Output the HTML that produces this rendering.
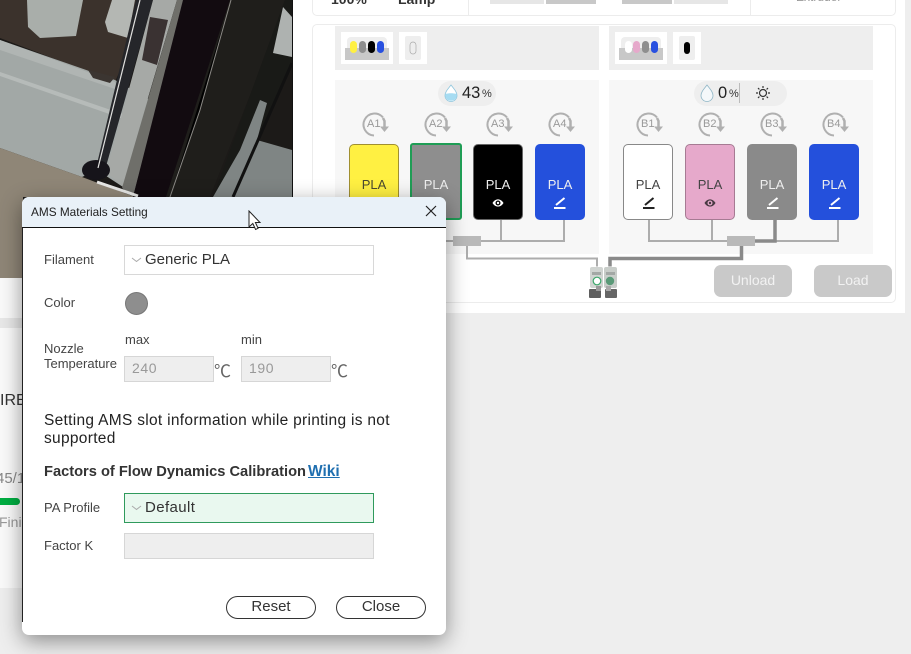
<!DOCTYPE html>
<html><head><meta charset="utf-8"><style>
html,body{margin:0;padding:0}
body{width:911px;height:654px;overflow:hidden;position:relative;background:#eeeeee;font-family:"Liberation Sans","DejaVu Sans",sans-serif;color:#323a3d}
div,span,a{position:absolute;white-space:nowrap;box-sizing:border-box}
.slot{top:144px;width:50px;height:76px;border-radius:5px;color:#fff;font-size:13px;text-align:center;line-height:16px;padding-top:32px}
.lab{font-size:13px;color:#444}
.in{background:#eee;border:1px solid #d6d6d6}
.btn{top:596px;height:23px;width:90px;border:1px solid #333;border-radius:12px;background:#fff;font-size:15px;text-align:center;line-height:19px;color:#333}
.gray{top:265px;width:78px;height:32px;border-radius:7px;background:#c9c9c9;color:#f2f2f2;font-size:14px;text-align:center;line-height:31px}
.n{top:118px;font-size:11px;line-height:13px;color:#999}
.deg{top:359px;font-size:17px;color:#666;line-height:22px;font-family:"Noto Sans CJK SC",sans-serif}
</style></head><body>

<!-- left panel -->
<div style="left:0;top:278px;width:23px;height:310px;background:#fafafa"></div>
<div style="left:0;top:318px;width:23px;height:10px;background:#e8e8e8"></div>
<div style="left:0;top:391px;width:23px;font-size:16px;color:#333;line-height:20px;height:20px;overflow:hidden">IRE</div>
<div style="left:-4px;top:470px;width:27px;font-size:15px;color:#888;overflow:hidden">45/1</div>
<div style="left:0;top:498px;width:20px;height:7px;background:#00ae42;border-radius:0 4px 4px 0"></div>
<div style="left:-1px;top:514px;width:24px;font-size:14px;color:#999;overflow:hidden">Fini</div>

<!-- right panel -->
<div style="left:293px;top:0;width:612px;height:313px;background:#fff"></div>
<div style="left:312px;top:-20px;width:584px;height:36px;border:1px solid #ececec;border-radius:5px"></div>
<div style="left:468px;top:0;width:1px;height:16px;background:#ececec"></div>
<div style="left:750px;top:0;width:1px;height:16px;background:#ececec"></div>
<div style="left:331px;top:-9px;font-size:14px;font-weight:bold;color:#333">100%</div>
<div style="left:398px;top:-9px;font-size:14px;font-weight:bold;color:#333">Lamp</div>
<div style="left:490px;top:0;width:54px;height:4px;background:#e6e6e6"></div>
<div style="left:546px;top:0;width:50px;height:4px;background:#c8c8c8"></div>
<div style="left:622px;top:0;width:50px;height:4px;background:#c8c8c8"></div>
<div style="left:674px;top:0;width:54px;height:4px;background:#e6e6e6"></div>
<div style="left:796px;top:-10px;font-size:12px;color:#999">Extruder</div>
<div style="left:312px;top:24px;width:584px;height:279px;border:1px solid #ececec;border-radius:5px"></div>

<div style="left:335px;top:26px;width:264px;height:44px;background:#eee"></div>
<div style="left:609px;top:26px;width:264px;height:44px;background:#eee"></div>
<div style="left:335px;top:80px;width:264px;height:174px;background:#f7f7f7"></div>
<div style="left:609px;top:80px;width:264px;height:174px;background:#f7f7f7"></div>

<svg style="position:absolute;left:0;top:0" width="911" height="654">
<rect x="341" y="32" width="52" height="32" fill="#fff"/><rect x="399" y="32" width="28" height="32" fill="#fff"/>
<rect x="347" y="37" width="40" height="22" rx="4" fill="#eee"/><rect x="345" y="48" width="44" height="12" fill="#c8c8c8"/>
<rect x="350" y="41" width="7" height="12" rx="3.500" fill="#fff042"/><rect x="359" y="41" width="7" height="12" rx="3.500" fill="#8e8e8e"/><rect x="368" y="41" width="7" height="12" rx="3.500" fill="#000"/><rect x="377" y="41" width="7" height="12" rx="3.500" fill="#2850e0"/>
<rect x="405" y="36" width="16" height="24" rx="2" fill="#eee"/><rect x="410" y="42" width="6" height="12" rx="3" fill="none" stroke="#aaa" stroke-width=".7"/>
<rect x="615" y="32" width="52" height="32" fill="#fff"/><rect x="673" y="32" width="28" height="32" fill="#fff"/>
<rect x="621" y="37" width="40" height="22" rx="4" fill="#eee"/><rect x="619" y="48" width="44" height="12" fill="#c8c8c8"/>
<rect x="625" y="41" width="7" height="12" rx="3.500" fill="#fff"/><rect x="633" y="41" width="7" height="12" rx="3.500" fill="#e6a9cb"/><rect x="642" y="41" width="7" height="12" rx="3.500" fill="#8e8e8e"/><rect x="651" y="41" width="7" height="12" rx="3.500" fill="#2850e0"/>
<rect x="679" y="36" width="16" height="24" rx="2" fill="#eee"/><rect x="684" y="42" width="6" height="12" rx="3" fill="#000"/>

<rect x="438" y="81" width="58" height="25" rx="12.500" fill="#eeeeee"/>
<rect x="694" y="81" width="93" height="25" rx="12.500" fill="#eeeeee"/>
<path d="M451 85c-3 4-6 7-6 10.500a6 6 0 0 0 12 0c0-3.500-3-6.500-6-10.500z" fill="#fff" stroke="#8fc6dd" stroke-width=".8"/>
<path d="M445.400 94c3-1 8-1 11.200 0 .6 4-2 6.800-5.600 6.800s-6.200-2.800-5.600-6.800z" fill="#a6dcf2"/>
<path d="M707 85c-3 4-6 7-6 10.500a6 6 0 0 0 12 0c0-3.500-3-6.500-6-10.500z" fill="#f4f8fa" stroke="#8fb6c6" stroke-width=".8"/>
<line x1="739.500" y1="83" x2="739.500" y2="103" stroke="#bbb"/>
<circle cx="763" cy="93" r="3.500" fill="none" stroke="#333" stroke-width="1.200"/>
<path d="M763 86v2M763 98v2M756 93h2M768 93h2M758 88l1.400 1.400M766.600 96.600l1.400 1.400M758 98l1.400-1.400M766.600 89.400l1.400-1.400" stroke="#333" stroke-width="1.200"/>

<g fill="none" stroke="#adadad" stroke-width="2">
<path d="M501 220v21M564 220v21H440M467 246v12.500h130v8"/>
<path d="M649 220v21h90M712 220v21M838 220v21H775"/>
</g>
<g fill="none" stroke="#8a8a8a" stroke-width="3.500">
<path d="M775 220v21H745M741.500 246v12.500H610v8"/>
</g>
<rect x="453" y="236" width="28" height="10" fill="#b9b9b9"/>
<rect x="727" y="236" width="28" height="10" fill="#b9b9b9"/>

<!-- extruder -->
<rect x="590" y="267" width="13" height="21" rx="2" fill="#d0d4d1"/><rect x="604" y="267" width="13" height="21" rx="2" fill="#c8cdc9"/>
<rect x="592" y="272" width="9" height="3" fill="#a3a8a5"/><rect x="606" y="272" width="9" height="3" fill="#a3a8a5"/>
<circle cx="597" cy="281" r="3.800" fill="#fff" stroke="#3aa76a" stroke-width="1.200"/><circle cx="610" cy="281" r="4.200" fill="#5a9a78"/>
<rect x="589" y="289" width="12" height="9" rx="1" fill="#5e5e5e"/><rect x="605" y="289" width="12" height="9" rx="1" fill="#666"/>
<rect x="596" y="286" width="5" height="5" fill="#999"/><rect x="606" y="286" width="5" height="5" fill="#aaa"/>
</svg>

<div style="left:462px;top:84px;font-size:16.500px;color:#222;line-height:18px">43</div><div style="left:482px;top:88px;font-size:11px;color:#333">%</div>
<div style="left:718px;top:84px;font-size:16.500px;color:#222;line-height:18px">0</div><div style="left:729px;top:88px;font-size:11px;color:#333">%</div>

<svg style="position:absolute;left:0;top:0" width="911" height="654" fill="none">
<defs><g id="r"><path d="M11 22.500A11 11 0 1 1 20 4.500" stroke="#b0b0b0" stroke-width="2" fill="none"/><path d="M20 5l1.500 3v7" stroke="#b0b0b0" stroke-width="2.500" fill="none"/><path d="M17 13.500h9l-4.500 5.500z" fill="#b0b0b0"/></g></defs>
<use href="#r" x="363" y="113"/><use href="#r" x="425" y="113"/><use href="#r" x="487" y="113"/><use href="#r" x="549" y="113"/>
<use href="#r" x="637" y="113"/><use href="#r" x="699" y="113"/><use href="#r" x="761" y="113"/><use href="#r" x="823" y="113"/>
</svg>
<div class="n" style="left:367px">A1</div><div class="n" style="left:429px">A2</div><div class="n" style="left:491px">A3</div><div class="n" style="left:553px">A4</div>
<div class="n" style="left:641px">B1</div><div class="n" style="left:703px">B2</div><div class="n" style="left:765px">B3</div><div class="n" style="left:827px">B4</div>

<div class="slot" style="left:349px;background:#fff042;border:1px solid #a08f30;color:#4a4a30">PLA</div>
<div class="slot" style="left:410px;top:143px;width:52px;height:77px;background:#8e8e8e;border:2px solid #1f9d55;border-radius:3px;color:#eee;padding-top:32px">PLA</div>
<div class="slot" style="left:473px;background:#000;border:1px solid #666;color:#eee">PLA</div>
<div class="slot" style="left:535px;background:#2450dc;color:#eee;padding-top:33px">PLA</div>
<div class="slot" style="left:623px;background:#fff;border:1px solid #888;color:#444">PLA</div>
<div class="slot" style="left:685px;background:#e6a9cb;border:1px solid #a67b93;color:#444">PLA</div>
<div class="slot" style="left:747px;background:#8a8a8a;color:#eee;padding-top:33px">PLA</div>
<div class="slot" style="left:809px;background:#2450dc;color:#eee;padding-top:33px">PLA</div>
<svg style="position:absolute;left:0;top:0" width="911" height="654" fill="none" stroke-width="2">
<defs>
<g id="pen"><path d="M2 9L10.500 2"/><path d="M0 12h11.500"/></g>
</defs>
<use href="#pen" x="554" y="196" stroke="#fff"/><use href="#pen" x="643" y="196" stroke="#222"/><use href="#pen" x="767" y="196" stroke="#fff"/><use href="#pen" x="829" y="196" stroke="#fff"/>
<path d="M492.500 203c3-4.800 8-4.800 11 0-3 4.800-8 4.800-11 0z" fill="#fff" stroke="none"/><circle cx="498" cy="203" r="2.500" fill="#000"/><circle cx="498" cy="203" r="1.200" fill="#fff"/>
<path d="M704.500 203c3-4.800 8-4.800 11 0-3 4.800-8 4.800-11 0z" fill="#4a3a44" stroke="none"/><circle cx="710" cy="203" r="2.500" fill="#e6a9cb"/><circle cx="710" cy="203" r="1.200" fill="#4a3a44"/>
</svg>

<div class="gray" style="left:714px">Unload</div>
<div class="gray" style="left:814px">Load</div>

<!-- photo -->
<svg style="position:absolute;left:0;top:0" width="293" height="278" viewBox="0 0 293 278">
<rect width="293" height="278" fill="#1c1a18"/>
<polygon points="0,0 150,0 115,82 0,38" fill="#3b322c"/>
<polygon points="27,0 83,0 76,36 40,38 28,27" fill="#a9aeaa"/>
<polygon points="105,22 112,0 135,0 128,38 108,32" fill="#b4b7b3"/>
<polygon points="0,40 115,80 150,100 135,150 123,187 97,170 82,177 0,148" fill="#a2a8a6"/>
<polygon points="0,40 115,82 118,90 0,50" fill="#b0b5b3"/>
<polygon points="0,72 140,120 138,124 0,76" fill="#b6bbb9"/>
<polygon points="88,70 115,77 110,83 93,78" fill="#3b3531"/>
<polygon points="0,148 82,177 135,197 23,197 23,278 0,278" fill="#8f8677"/>
<polygon points="136,0 153,0 122,110 105,170 96,168" fill="#25262a"/>
<polygon points="153,0 177,0 140,125 123,187 106,172 130,85" fill="#a6a9a6"/>
<polygon points="150,17 168,20 157,65 142,60" fill="#3a3232"/>
<polygon points="177,0 185,0 133,197 122,188" fill="#6f6f6a"/>
<polygon points="183,0 230,0 166,197 133,197" fill="#120b10"/>
<polygon points="230,0 285,0 252,90 210,197 166,197" fill="#1f1e1b"/>
<polygon points="285,0 292,0 292,60 233,197 213,197" fill="#191a17"/>
<polygon points="273,53 283,7 292,17 292,57" fill="#aeb2b0"/>
<polygon points="213,197 240,150 260,100 267,103 257,140 292,150 292,197" fill="#7f8584"/>
<path d="M292 63L233 197" stroke="#111" stroke-width="3"/>
<path d="M82 170a14 10 0 1 0 28 0 14 10 0 1 0-28 0z" fill="#16141a"/>
<path d="M97 182L138 196" stroke="#e8e8e6" stroke-width="3"/>
<path d="M140 0L98 168" stroke="#e0e0de" stroke-width="1.200"/>
<path d="M231 0L200 110L170 197" stroke="#8d8b87" stroke-width="1"/>
<line x1="292.500" y1="0" x2="292.500" y2="197" stroke="#111"/>
</svg>

<!-- dialog -->
<div style="left:22px;top:197px;width:424px;height:438px;background:#fff;border-radius:7px;box-shadow:0 6px 22px rgba(0,0,0,.42)"></div>
<div style="left:22px;top:197px;width:424px;height:31px;background:#e9f1f8;border-radius:7px 7px 0 0;border-bottom:1px solid #111"></div>
<div style="left:22px;top:228px;width:1px;height:394px;background:#222"></div>
<div style="left:31px;top:204px;font-size:11.800px;color:#222;line-height:16px">AMS Materials Setting</div>
<svg style="position:absolute;left:424px;top:204px" width="14" height="14"><path d="M2 2l10 10M12 2L2 12" stroke="#222" stroke-width="1.200"/></svg>
<svg style="position:absolute;left:247px;top:210px" width="16" height="22"><path d="M2 1v16l3.800-3.500 2.800 6 2.500-1.200-2.700-5.800H13z" fill="#fff" stroke="#222" stroke-width="1"/></svg>

<div class="lab" style="left:44px;top:252px;line-height:16px">Filament</div>
<div style="left:124px;top:245px;width:250px;height:30px;border:1px solid #d8d8d8;font-size:15px;color:#333;padding-left:20px;line-height:27px">Generic PLA</div>
<svg style="position:absolute;left:131px;top:257px" width="12" height="6"><path d="M1 1l4.500 3.500L10 1" fill="none" stroke="#aaa"/></svg>

<div class="lab" style="left:44px;top:295px;line-height:16px">Color</div>
<div style="left:125px;top:292px;width:23px;height:23px;border-radius:50%;background:#8e8e8e;border:1px solid #777"></div>

<div class="lab" style="left:125px;top:332px;line-height:16px">max</div>
<div class="lab" style="left:241px;top:332px;line-height:16px">min</div>
<div class="lab" style="left:44px;top:341px;line-height:16px">Nozzle</div>
<div class="lab" style="left:44px;top:356px;line-height:16px">Temperature</div>
<div class="in" style="left:124px;top:356px;width:90px;height:26px;font-size:14px;color:#999;padding-left:7px;line-height:23px;letter-spacing:.6px">240</div>
<div class="in" style="left:241px;top:356px;width:90px;height:26px;font-size:14px;color:#999;padding-left:7px;line-height:23px;letter-spacing:.6px">190</div>
<div class="deg" style="left:214px">℃</div>
<div class="deg" style="left:331px">℃</div>

<div style="left:44px;top:412px;font-size:15.500px;letter-spacing:.3px;color:#222;line-height:18px">Setting AMS slot information while printing is not<br>supported</div>
<div style="left:44px;top:463px;font-size:14.650px;font-weight:bold;color:#333;line-height:18px">Factors of Flow Dynamics Calibration</div>
<div style="left:308px;top:463px;font-size:15.500px;font-weight:bold;color:#1f6fb0;line-height:18px;text-decoration:underline">Wiki</div>

<div class="lab" style="left:44px;top:500px;line-height:16px">PA Profile</div>
<div style="left:124px;top:493px;width:250px;height:30px;background:#e9f8ef;border:1px solid #2f9a5c;font-size:15px;letter-spacing:.4px;color:#333;padding-left:20px;line-height:27px">Default</div>
<svg style="position:absolute;left:131px;top:505px" width="12" height="6"><path d="M1 1l4.500 3.500L10 1" fill="none" stroke="#aaa"/></svg>
<div class="lab" style="left:44px;top:538px;line-height:16px">Factor K</div>
<div class="in" style="left:124px;top:533px;width:250px;height:26px"></div>

<div class="btn" style="left:226px">Reset</div>
<div class="btn" style="left:336px">Close</div>
</body></html>
